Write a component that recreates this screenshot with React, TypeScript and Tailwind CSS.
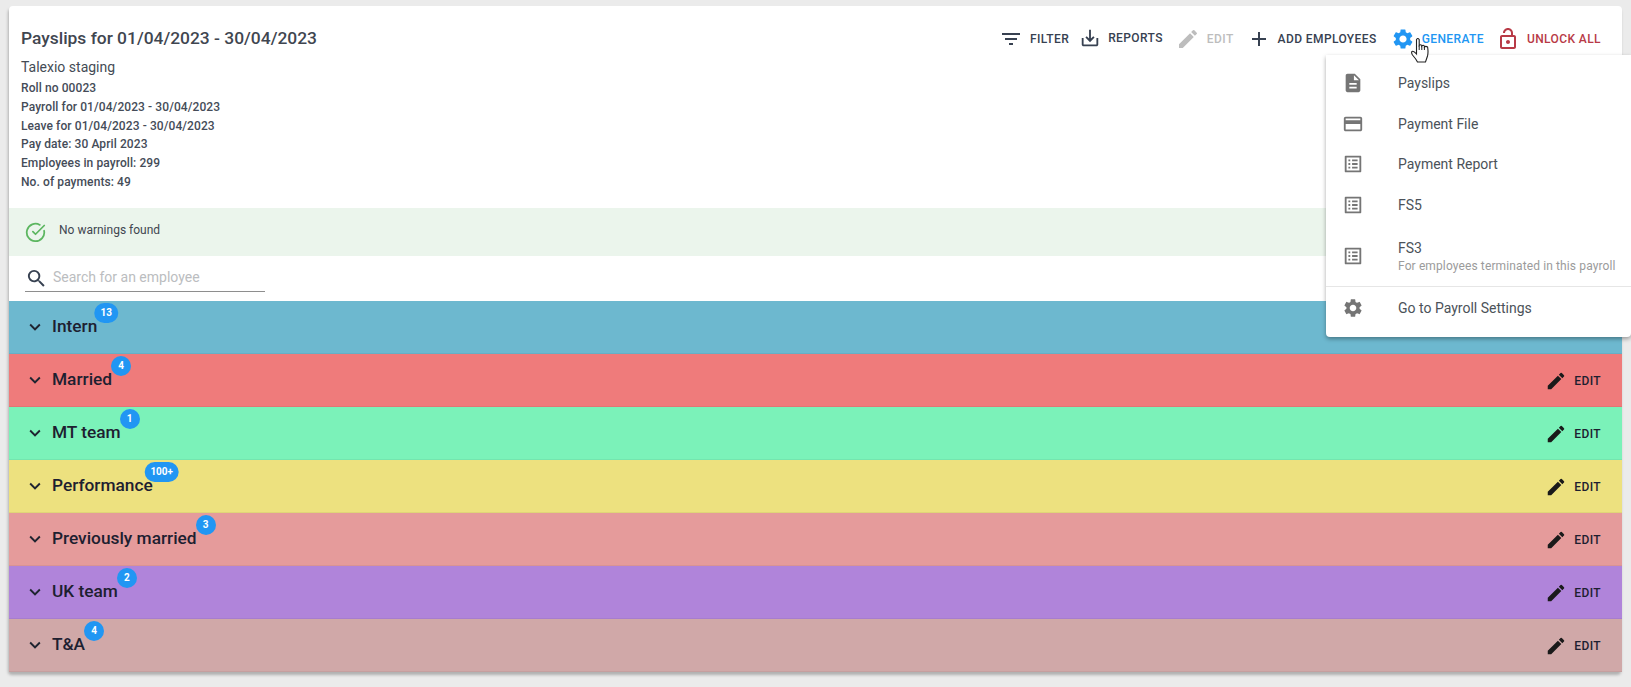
import React from 'react';
import { LuCircleCheckBig } from 'react-icons/lu';
import {
  MdAdd,
  MdCreditCard,
  MdDescription,
  MdEdit,
  MdFilterList,
  MdKeyboardArrowDown,
  MdOutlineListAlt,
  MdOutlineLockOpen,
  MdOutlineSaveAlt,
  MdSearch,
  MdSettings,
} from 'react-icons/md';

const groups = [
  { name: 'Intern', count: '13', bg: 'bg-[#6db8cf]' },
  { name: 'Married', count: '4', bg: 'bg-[#ef7b7b]' },
  { name: 'MT team', count: '1', bg: 'bg-[#7bf2b9]' },
  { name: 'Performance', count: '100+', bg: 'bg-[#ede17f]' },
  { name: 'Previously married', count: '3', bg: 'bg-[#e59b9b]' },
  { name: 'UK team', count: '2', bg: 'bg-[#b084da]' },
  { name: 'T&A', count: '4', bg: 'bg-[#d0a8a8]' },
];

const details = [
  'Roll no 00023',
  'Payroll for 01/04/2023 - 30/04/2023',
  'Leave for 01/04/2023 - 30/04/2023',
  'Pay date: 30 April 2023',
  'Employees in payroll: 299',
  'No. of payments: 49',
];

const ToolbarButton: React.FC<{ icon: React.ReactNode; label: string; color: string }> = ({ icon, label, color }) => (
  <div className={`flex items-center gap-[7px] text-xs font-medium tracking-[0.4px] ${color}`}>
    {icon}
    <span>{label}</span>
  </div>
);

const MenuItem: React.FC<{ icon: React.ReactNode; label: string; sub?: string; h: string }> = ({ icon, label, sub, h }) => (
  <div className={`flex items-center ${h}`}>
    <div className="w-[54px] mr-[18px] flex justify-center text-[#757575]">{icon}</div>
    <div>
      <div className="text-sm leading-[20px] text-[#4b5259]">{label}</div>
      {sub && <div className="text-xs leading-[16px] tracking-[0.12px] text-[#9b9b9b]">{sub}</div>}
    </div>
  </div>
);

const GenerateMenu = () => (
  <div className="absolute z-20 top-[55px] left-[1326px] w-[305px] h-[282px] bg-white rounded-b-[4px] shadow-[0_2px_4px_rgba(0,0,0,0.35)] pt-[7px]">
    <MenuItem h="h-[41px]" icon={<MdDescription size={22} />} label="Payslips" />
    <MenuItem h="h-[41px]" icon={<MdCreditCard size={22} />} label="Payment File" />
    <MenuItem h="h-[40px]" icon={<MdOutlineListAlt size={22} />} label="Payment Report" />
    <MenuItem h="h-[41px]" icon={<MdOutlineListAlt size={22} />} label="FS5" />
    <MenuItem h="h-[61px]" icon={<MdOutlineListAlt size={22} />} label="FS3" sub="For employees terminated in this payroll" />
    <div className="border-t border-[#e6e6e6]">
      <MenuItem h="h-[41px]" icon={<MdSettings size={22} />} label="Go to Payroll Settings" />
    </div>
  </div>
);

const GroupRow: React.FC<{ name: string; count: string; bg: string }> = ({ name, count, bg }) => (
  <div className={`h-[53px] flex items-center justify-between pl-[15px] pr-[21px] border-b border-black/5 ${bg}`}>
    <div className="flex items-center">
      <MdKeyboardArrowDown size={22} className="text-[#1f2430]" />
      <div className="relative ml-[6px] mb-[2px] text-[17.3px] leading-[24px] font-medium text-[#1d2030]">
        {name}
        <span className="absolute left-full top-[-11px] ml-[9px] -translate-x-1/2 h-[20px] min-w-[20px] px-[6px] rounded-full bg-[#2196f3] text-white text-[10px] font-bold leading-[20px] text-center">
          {count}
        </span>
      </div>
    </div>
    <div className="flex items-center gap-[7px] mt-[1px] text-xs font-medium tracking-[0.4px] text-[#1d2030]">
      <MdEdit size={22} className="text-[#1a1a1a]" />
      <span>EDIT</span>
    </div>
  </div>
);

// cursor sitting on the GENERATE button
const HandCursor = () => (
  <svg width="18" height="25" viewBox="0 0 18 25" className="absolute z-30 top-[38px] left-[1411px]">
    <path
      d="M5.5 1.5Q6.8-.5 8.2 1.5V7.5Q9.5 6 10.8 7.5V8Q12.1 6.5 13.4 8V9Q14.7 7.7 16.6 9Q17.5 14 16.5 18Q15.5 21 14.5 24H6.5Q5 21 1.5 17Q0 14.5 1 13.5Q2.5 12.5 5.5 16Z"
      fill="#fff"
      stroke="#222"
      strokeWidth="1.1"
    />
    <path d="M8.2 7.5V12M10.8 8V12M13.4 9V12" fill="none" stroke="#222" strokeWidth="1" />
  </svg>
);

export default function App() {
  return (
    <div className="relative h-[687px] overflow-hidden bg-[#ebebeb] pt-[6px] px-[9px] font-['Roboto',sans-serif]">
      <div className="bg-white rounded-[4px] shadow-[-1px_3px_3px_rgba(0,0,0,0.25)]">
        <div className="flex justify-between h-[202px] pl-[12px] pr-[21px]">
          <div>
            <div className="pt-[21px] text-[17.4px] leading-[22px] font-medium text-[#3f4650]">Payslips for 01/04/2023 - 30/04/2023</div>
            <div className="mt-[8px] text-sm leading-[20px] text-[#444b55]">Talexio staging</div>
            <div className="mt-[2px] text-xs font-medium tracking-[0.09px] text-[#454c58]">
              {details.map((line) => (
                <div key={line} className="leading-[18.8px]">{line}</div>
              ))}
            </div>
          </div>
          <div className="flex items-start pt-[21px] h-[48px]">
            <ToolbarButton icon={<MdFilterList size={24} />} label="FILTER" color="text-[#374151]" />
            <div className="ml-[10px]">
              <ToolbarButton icon={<MdOutlineSaveAlt size={22} />} label="REPORTS" color="text-[#374151]" />
            </div>
            <div className="ml-[13px]">
              <ToolbarButton icon={<MdEdit size={24} />} label="EDIT" color="text-[#bdbdbd]" />
            </div>
            <div className="ml-[13px]">
              <ToolbarButton icon={<MdAdd size={24} />} label="ADD EMPLOYEES" color="text-[#374151]" />
            </div>
            <div className="ml-[14px]">
              <ToolbarButton icon={<MdSettings size={24} />} label="GENERATE" color="text-[#2196f3]" />
            </div>
            <div className="ml-[12px]">
              <ToolbarButton icon={<MdOutlineLockOpen size={24} />} label="UNLOCK ALL" color="text-[#b83a46]" />
            </div>
          </div>
        </div>
        <div className="h-[48px] flex items-center bg-[#ebf5ec] pl-[16px] text-xs text-[#3f4650]">
          <LuCircleCheckBig size={21} className="text-[#5cb660]" />
          <span className="ml-[13px] mb-[4px]">No warnings found</span>
        </div>
        <div className="h-[45px] pl-[16px]">
          <div className="flex items-center w-[240px] h-[36px] pt-[8px] border-b border-[#8e8e8e] text-sm text-[#bbbdc0]">
            <MdSearch size={23} className="text-[#374151] mt-[1px]" />
            <span className="ml-[5px] mb-[1px]">Search for an employee</span>
          </div>
        </div>
        {groups.map((g) => (
          <GroupRow key={g.name} {...g} />
        ))}
      </div>
      <GenerateMenu />
      <HandCursor />
    </div>
  );
}
